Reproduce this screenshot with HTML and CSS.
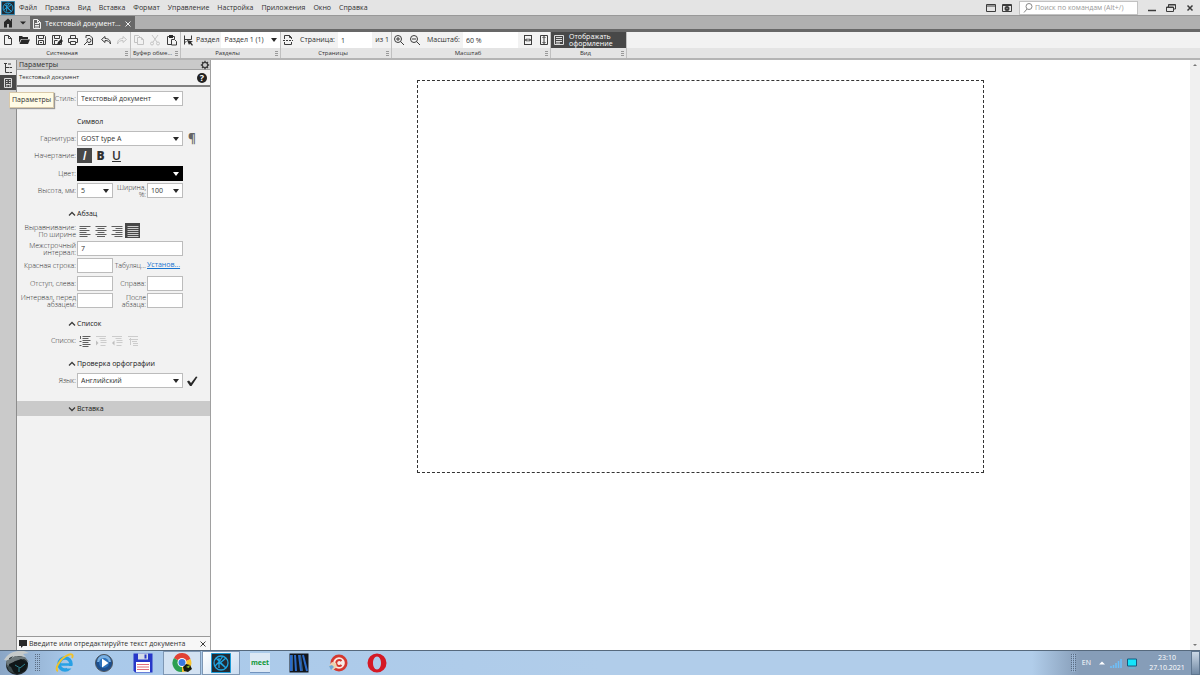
FILE: index.html
```html
<!DOCTYPE html>
<html lang="ru">
<head>
<meta charset="utf-8">
<title>Текстовый документ</title>
<link rel="stylesheet" href="styles.css">
</head>
<body>
<svg class="sprite" aria-hidden="true">
  <symbol id="i-page" viewBox="0 0 12 12"><path d="M2.500 1.500h4l3 3v6h-7zM6.500 1.500v3h3"/></symbol>
  <symbol id="i-folder" viewBox="0 0 12 12"><path class="fill" d="M1 2h3l1 1h5v2H3L1 9zM3.500 5.500H12L10 10H1.500z"/></symbol>
  <symbol id="i-save" viewBox="0 0 12 12"><path d="M1.500 1.500h8l1 1v8h-9zM3.500 1.500v3h5v-3M3.500 10.500v-4h5v4M5 8.500h2"/></symbol>
  <symbol id="i-saveas" viewBox="0 0 12 12"><path d="M1.500 1.500h8l1 1v8h-9zM3.500 1.500v3h5v-3M3.500 10.500v-4h3"/><path class="fill" d="M6 11l1-3 3-3 2 2-3 3z"/></symbol>
  <symbol id="i-print" viewBox="0 0 12 12"><path d="M3.500 4v-2.500h5V4M3 8.500H1.500v-4h9v4H9M3.500 7.500h5v3h-5z"/></symbol>
  <symbol id="i-preview" viewBox="0 0 12 12"><path d="M3 4V1.500h4l2.500 2.500v6.500H5M1 11l3-3"/><circle cx="6" cy="6.500" r="2"/></symbol>
  <symbol id="i-undo" viewBox="0 0 12 12"><path d="M5 2.500L1.500 5.500 5 8.500v-2c3 0 4.500 1 5.500 3.500C10.500 6.500 9 4.500 5 4.500z"/></symbol>
  <symbol id="i-redo" viewBox="0 0 12 12"><path d="M7 2.500l3.500 3L7 8.500v-2c-3 0-4.500 1-5.500 3.500C1.500 6.500 3 4.500 7 4.500z"/></symbol>
  <symbol id="i-copy" viewBox="0 0 12 12"><path d="M4 8.500H1.500v-7h4L7 3M4.500 3.500h4l2 2v5h-6zM8.500 3.500v2h2"/></symbol>
  <symbol id="i-cut" viewBox="0 0 12 12"><path d="M3 1l5 7M9 1L4 8"/><circle cx="3" cy="9.500" r="1.500"/><circle cx="9" cy="9.500" r="1.500"/></symbol>
  <symbol id="i-paste" viewBox="0 0 12 12"><path d="M5 10.500H1.500v-8h7V5M5.500 5.500h3l2 2v3.500h-5z"/><path class="fill" d="M3 1h4v3H3z"/></symbol>
  <symbol id="i-section" viewBox="0 0 12 12"><path d="M2.500 1.500v9M2.500 5.500h7M9.500 1.500v4M4.500 7L2.500 9"/><path class="fill" d="M5 6l6 1.500-2 1L11 11l-1 .8L8 9.500 7 11z"/></symbol>
  <symbol id="i-pagebreak" viewBox="0 0 12 12"><path d="M2.500 5V1.500h5l2 2V5M7.500 1.500v2h2M2.500 8v2.500h7V8"/><path d="M1 6.500h10" stroke-dasharray="2 1"/></symbol>
  <symbol id="i-zoomin" viewBox="0 0 12 12"><circle cx="5" cy="5" r="3.500"/><path d="M3 5h4M5 3v4M7.500 7.500L11 11"/></symbol>
  <symbol id="i-zoomout" viewBox="0 0 12 12"><circle cx="5" cy="5" r="3.500"/><path d="M3 5h4M7.500 7.500L11 11"/></symbol>
  <symbol id="i-fitw" viewBox="0 0 12 12"><path d="M2 1.500h8M2 10.500h8M2.500 1v10M9.500 1v10M3 6h6M5 4.500L3.500 6 5 7.500M7 4.500L8.500 6 7 7.500"/></symbol>
  <symbol id="i-fith" viewBox="0 0 12 12"><path d="M2.500 1.500h7v9h-7zM6 2.500v7M4.500 4L6 2.500 7.500 4M4.500 8L6 9.500 7.500 8"/></symbol>
  <symbol id="i-sheet" viewBox="0 0 12 12"><path d="M1.500 1.500h9v9h-9zM3 3.500h6M3 5.500h6M3 7.500h6M3 9h4"/></symbol>
  <symbol id="i-tree" viewBox="0 0 12 12"><path d="M3.500 1v9.500M2 1.500h3M3.500 5.500H7M3.500 10.500H7M6 2h3M7.500 5.500H10M7.500 10.500H10"/></symbol>
  <symbol id="i-params" viewBox="0 0 12 12"><path d="M2.500 1.500h7v9h-7zM4 3.500h1.500M7 3.500h1.500M4 5.500h1.500M7 5.500h1.500M4 7.500h4.500M4 9h1.500M7 9h1.500"/></symbol>
  <symbol id="i-left" viewBox="0 0 12 12"><path d="M.5 1.500h11M.5 3.500h7M.5 5.500h10M.5 7.500h7M.5 9.500h11M.5 11.500h8"/></symbol>
  <symbol id="i-center" viewBox="0 0 12 12"><path d="M.5 1.500h11M2.500 3.500h7M.5 5.500h11M2.500 7.500h7M.5 9.500h11M2 11.500h8"/></symbol>
  <symbol id="i-right" viewBox="0 0 12 12"><path d="M.5 1.500h11M4.500 3.500h7M1.500 5.500h10M4.500 7.500h7M.5 9.500h11M3.500 11.500h8"/></symbol>
  <symbol id="i-justify" viewBox="0 0 12 12"><path d="M.5 1.500h11M.5 3.500h11M.5 5.500h11M.5 7.500h11M.5 9.500h11M.5 11.500h11"/></symbol>
  <symbol id="i-list" viewBox="0 0 12 12"><path d="M3.500 1.500h8M3.500 3.500h6M3.500 5.500h8M3.500 7.500h6M3.500 9.500h8M3.500 11.500h6M1.500 1v3M.5 6.500h2M.5 10.500h2"/></symbol>
  <symbol id="i-indent" viewBox="0 0 12 12"><path d="M1 1.500h10M4.500 3.500h6M5.500 5.500h6M5.500 7.500h6M5.500 10.500h5"/><path class="fill" d="M1 5.500v5L3.500 8z"/></symbol>
  <symbol id="i-outdent" viewBox="0 0 12 12"><path d="M1 1.500h10M4.500 3.500h6M5.500 5.500h6M5.500 7.500h6M5.500 10.500h5"/><path class="fill" d="M3.500 5.500v5L1 8z"/></symbol>
  <symbol id="i-sublist" viewBox="0 0 12 12"><path d="M1 1.500h10M3.500 3v7M2 4.500h9M5 6.500h5M6 8.500h5M6 10.500h5"/></symbol>
  <symbol id="i-up" viewBox="0 0 8 8"><path d="M1 5.500l3-3 3 3" stroke-width="1.300"/></symbol>
  <symbol id="i-down" viewBox="0 0 8 8"><path d="M1 2.500l3 3 3-3" stroke-width="1.300"/></symbol>
  <symbol id="i-caret" viewBox="0 0 8 8"><path class="fill" d="M1 2h6L4 6z"/></symbol>
  <symbol id="i-compas" viewBox="0 0 20 20"><path fill="#222b33" stroke="#1b9ad6" d="M.5.5h19v19H.5z"/><g stroke="#20a4e0" stroke-width="1.300"><circle cx="10" cy="10" r="7"/><path d="M8 5v10M15 5l-6 5 6 5M5 5l10 10M4 13l4-4M12 3l-4 6"/></g></symbol>
</svg>

<div class="app">
  <header class="menubar">
    <svg class="logo"><use href="#i-compas"/></svg>
    <nav class="menu">
      <button>Файл</button><button>Правка</button><button>Вид</button><button>Вставка</button><button>Формат</button><button>Управление</button><button>Настройка</button><button>Приложения</button><button>Окно</button><button>Справка</button>
    </nav>
    <button class="tool" aria-label="Раскладка окон"><svg viewBox="0 0 12 12"><path d="M1.500 2.500h9v7h-9zM1.500 4h9"/></svg></button>
    <button class="tool" aria-label="Настройка экрана"><svg viewBox="0 0 12 12"><path d="M1.500 2.500h9v7h-9zM1.500 3.500h9"/><circle cx="6" cy="6.500" r="1.500" stroke-width="2"/></svg></button>
    <label class="search"><svg viewBox="0 0 12 12"><circle cx="7" cy="4.500" r="3"/><path d="M5 7L2 10.500"/></svg><input type="search" aria-label="Поиск по командам" placeholder="Поиск по командам (Alt+/)"></label>
    <div class="winctl">
      <button aria-label="Свернуть"><svg viewBox="0 0 12 12"><path d="M2 8.500h8" stroke-width="1.500"/></svg></button>
      <button aria-label="Восстановить"><svg viewBox="0 0 12 12"><path d="M1.500 5h7v4.500h-7zM3.500 5V2.500h7V7h-2M3.500 3h7M1.500 5.500h7"/></svg></button>
      <button aria-label="Закрыть"><svg viewBox="0 0 12 12"><path d="M3.500 3.500l5 5M8.500 3.500l-5 5" stroke-width="1.500"/></svg></button>
    </div>
  </header>

  <div class="tabs">
    <button class="home" aria-label="Главная"><svg viewBox="0 0 12 12"><path class="fill" d="M2 5l4-3.500L10 5v5.500H7V7H5v3.500H2zM9 2h1v3L9 4z"/></svg></button>
    <button class="homemenu" aria-label="Список вкладок"><svg viewBox="0 0 8 8"><path class="fill" d="M2 3h4L4 5z"/></svg></button>
    <div class="tab">
      <svg viewBox="0 0 12 12"><path d="M2.500 1.500h4l3 3v6h-7zM4 5.500h4M4 7.500h4M4 9h4M6.500 1.500v3h3"/></svg>
      <span>Текстовый документ...</span>
      <button aria-label="Закрыть вкладку"><svg class="small" viewBox="0 0 8 8"><path d="M1.500 1.500l5 5M6.500 1.500l-5 5"/></svg></button>
    </div>
  </div>

  <div class="ribbon">
    <section class="group g-system">
      <div class="tools">
        <button aria-label="Создать"><svg><use href="#i-page"/></svg></button>
        <button aria-label="Открыть"><svg><use href="#i-folder"/></svg></button>
        <button aria-label="Сохранить"><svg><use href="#i-save"/></svg></button>
        <button aria-label="Сохранить как"><svg><use href="#i-saveas"/></svg></button>
        <button aria-label="Печать"><svg><use href="#i-print"/></svg></button>
        <button aria-label="Просмотр"><svg><use href="#i-preview"/></svg></button>
        <button aria-label="Отменить"><svg><use href="#i-undo"/></svg></button>
        <button aria-label="Повторить" disabled><svg><use href="#i-redo"/></svg></button>
      </div>
      <h2>Системная</h2>
    </section>
    <section class="group g-clip">
      <div class="tools">
        <button aria-label="Копировать" disabled><svg><use href="#i-copy"/></svg></button>
        <button aria-label="Вырезать" disabled><svg><use href="#i-cut"/></svg></button>
        <button aria-label="Вставить"><svg><use href="#i-paste"/></svg></button>
      </div>
      <h2>Буфер обме...</h2>
    </section>
    <section class="group g-sections">
      <div class="tools fields">
        <svg><use href="#i-section"/></svg>
        <label for="section">Раздел</label>
        <span class="select grow"><select id="section"><option>Раздел 1 (1)</option></select><svg class="small"><use href="#i-caret"/></svg></span>
      </div>
      <h2>Разделы</h2>
    </section>
    <section class="group g-pages">
      <div class="tools fields">
        <svg><use href="#i-pagebreak"/></svg>
        <label for="page">Страница:</label>
        <input id="page" class="grow" value="1">
        <span>из 1</span>
      </div>
      <h2>Страницы</h2>
    </section>
    <section class="group g-zoom">
      <div class="tools fields">
        <button aria-label="Увеличить"><svg><use href="#i-zoomin"/></svg></button>
        <button aria-label="Уменьшить"><svg><use href="#i-zoomout"/></svg></button>
        <label for="zoom">Масштаб:</label>
        <input id="zoom" class="grow" value="60 %">
        <button aria-label="По ширине"><svg><use href="#i-fitw"/></svg></button>
        <button aria-label="По высоте"><svg><use href="#i-fith"/></svg></button>
      </div>
      <h2>Масштаб</h2>
    </section>
    <section class="group g-view">
      <button class="toggle"><svg><use href="#i-sheet"/></svg><span>Отображать<br>оформление</span></button>
      <h2>Вид</h2>
    </section>
    <div class="rest"></div>
  </div>

  <main class="work">
    <nav class="rail">
      <button aria-label="Дерево"><svg><use href="#i-tree"/></svg></button>
      <button class="on" aria-label="Параметры"><svg><use href="#i-params"/></svg></button>
      <div class="tooltip" role="tooltip">Параметры</div>
    </nav>

    <aside class="panel">
      <div class="phead"><span>Параметры</span><button aria-label="Настройка панели"><svg viewBox="0 0 12 12"><circle cx="6" cy="6" r="3.200" stroke-width="1.400"/><path stroke-width="1.600" d="M6 1v2M6 9v2M1 6h2M9 6h2M2.500 2.500l1.300 1.300M8.200 8.200l1.300 1.300M9.500 2.500L8.200 3.800M3.800 8.200L2.500 9.500"/></svg></button></div>
      <div class="psub"><span>Текстовый документ</span><button class="help" aria-label="Справка">?</button></div>

      <form class="form">
        <div class="row">
          <label for="style">Стиль:</label>
          <span class="select wide"><select id="style"><option>Текстовый документ</option></select><svg class="small"><use href="#i-caret"/></svg></span>
        </div>

        <h3>Символ</h3>
        <div class="row">
          <label for="font">Гарнитура:</label>
          <span class="select wide"><select id="font"><option>GOST type A</option></select><svg class="small"><use href="#i-caret"/></svg></span>
          <button type="button" class="pilcrow" aria-label="Непечатаемые символы">¶</button>
        </div>
        <div class="row tall">
          <span class="label">Начертание:</span>
          <span class="btns letters"><button type="button" class="on"><i>I</i></button><button type="button"><b>B</b></button><button type="button"><u>U</u></button></span>
        </div>
        <div class="row">
          <label for="color">Цвет:</label>
          <span class="select wide black"><select id="color"><option aria-label="Чёрный"></option></select><svg class="small"><use href="#i-caret"/></svg></span>
        </div>
        <div class="row">
          <label for="height">Высота, мм:</label>
          <span class="select half"><select id="height"><option>5</option></select><svg class="small"><use href="#i-caret"/></svg></span>
          <label for="width">Ширина,<br>%:</label>
          <span class="select half"><select id="width"><option>100</option></select><svg class="small"><use href="#i-caret"/></svg></span>
        </div>

        <h3><svg class="small"><use href="#i-up"/></svg>Абзац</h3>
        <div class="row tall">
          <span class="label">Выравнивание:<br>По ширине</span>
          <span class="btns align"><button type="button" aria-label="По левому краю"><svg><use href="#i-left"/></svg></button><button type="button" aria-label="По центру"><svg><use href="#i-center"/></svg></button><button type="button" aria-label="По правому краю"><svg><use href="#i-right"/></svg></button><button type="button" class="on" aria-label="По ширине"><svg><use href="#i-justify"/></svg></button></span>
        </div>
        <div class="row">
          <label for="leading">Межстрочный<br>интервал:</label>
          <input id="leading" class="wide" value="7">
        </div>
        <div class="row tall">
          <label for="indent">Красная строка:</label>
          <input id="indent" class="half">
          <span class="label">Табуляц...</span>
          <a href="#tabs">Установ...</a>
        </div>
        <div class="row">
          <label for="left">Отступ, слева:</label>
          <input id="left" class="half">
          <label for="right">Справа:</label>
          <input id="right" class="half">
        </div>
        <div class="row">
          <label for="before">Интервал, перед<br>абзацем:</label>
          <input id="before" class="half">
          <label for="after">После<br>абзаца:</label>
          <input id="after" class="half">
        </div>

        <h3><svg class="small"><use href="#i-up"/></svg>Список</h3>
        <div class="row">
          <span class="label">Список:</span>
          <span class="btns align"><button type="button" aria-label="Список"><svg><use href="#i-list"/></svg></button><button type="button" disabled aria-label="Увеличить уровень"><svg><use href="#i-indent"/></svg></button><button type="button" disabled aria-label="Уменьшить уровень"><svg><use href="#i-outdent"/></svg></button><button type="button" disabled aria-label="Подсписок"><svg><use href="#i-sublist"/></svg></button></span>
        </div>

        <h3><svg class="small"><use href="#i-up"/></svg>Проверка орфографии</h3>
        <div class="row">
          <label for="lang">Язык:</label>
          <span class="select wide"><select id="lang"><option>Английский</option></select><svg class="small"><use href="#i-caret"/></svg></span>
          <button type="button" class="check" aria-label="Проверить"><svg viewBox="0 0 12 12"><path class="fill" d="M1 6.500L3 5.500l2 2.500L10 1.500l1.500.5L5.500 11H4z"/></svg></button>
        </div>
        <h3 class="bar"><svg class="small"><use href="#i-down"/></svg>Вставка</h3>
      </form>

      <div class="hint"><svg class="small" viewBox="0 0 8 8"><path class="fill" d="M0 0h8v6H4L2 8V6H0z"/></svg><span>Введите или отредактируйте текст документа</span><button aria-label="Закрыть подсказку"><svg class="small" viewBox="0 0 8 8"><path d="M1.500 1.500l5 5M6.500 1.500l-5 5"/></svg></button></div>
    </aside>

    <div class="canvas"><div class="sheet"></div></div>
    <div class="scroll"><svg viewBox="0 0 8 8"><path d="M2 5h4L4 3z"/></svg><svg viewBox="0 0 8 8"><path d="M2 3h4L4 5z"/></svg></div>
  </main>

  <footer class="taskbar">
    <button class="start" aria-label="Пуск"><svg viewBox="0 0 30 24"><ellipse cx="16" cy="14" rx="11" ry="10" fill="#20282b"/><path fill="#c5caca" d="M3 9C7 2 14-1 23 0l5 2-6 1 3 3-8-1-8 4 3-4-4 2 1 3z"/><path fill="#6d787b" d="M5 10l9-5 10 1 4 5-5-3-9 2-8 6z"/><path fill="#101719" d="M8 13l12-5 7 4-3 8-8 3-7-4z"/><path fill="#3c4a4d" d="M6 14l4 2 3 6-5-2z"/><path d="M14 14l5 3 5-4M18 17v4" stroke="#2c8290"/></svg></button>
    <div class="grip"></div>
    <div class="apps">
      <button aria-label="Internet Explorer"><svg viewBox="0 0 20 20"><circle cx="10" cy="11" r="6" stroke="#28a1e5" stroke-width="3.500"/><path d="M5 11.500h12" stroke="#28a1e5" stroke-width="2.500"/><path d="M12 15.500h7V13h-7z" fill="#aacbe9"/><path d="M3 18C-1 17 4 7 11 3c5-3 8-2 6 2" stroke="#f0c22c" stroke-width="2"/></svg></button>
      <button aria-label="Проигрыватель"><svg viewBox="0 0 20 20"><circle cx="10" cy="10" r="8.500" fill="#1d4f8e" stroke="#50565c"/><path d="M3 9a7 7 0 0 1 14 0z" fill="#78afe2"/><circle cx="10" cy="10" r="5" fill="#2c71bb"/><path d="M8 5.500v9l6.500-4.500z" fill="#fff"/></svg></button>
      <button aria-label="Total Commander"><svg viewBox="0 0 20 20"><path d="M.5.5h19v19H2l-1.500-2z" fill="#2737c8"/><path d="M5 .5h10v6H5z" fill="#d5dce8"/><path d="M11.500 1.500h2v4h-2z" fill="#2737c8"/><path d="M3 9h14v10H3z" fill="#fff"/><path d="M4 11.500h12M4 14h12M4 16.500h12" stroke="#df6c7a"/></svg></button>
      <button class="open" aria-label="Chrome"><svg viewBox="0 0 20 20"><path d="M10 10L2 5a9 9 0 0 1 16.500 1z" fill="#e24234"/><path d="M10 10l8.500-4A9 9 0 0 1 10 19z" fill="#f8c42e"/><path d="M10 10v9A9 9 0 0 1 2 5z" fill="#2c9f52"/><circle cx="10" cy="9.500" r="4.500" fill="#fff"/><circle cx="10" cy="9.500" r="3.500" fill="#3979e1"/><path d="M11 14l3-3 4 1 2 4-4 3-4-1z" fill="#151a10"/><path d="M14 14l4-2-1 3z" fill="#8bc02d"/></svg></button>
      <button class="open current" aria-label="Компас"><svg><use href="#i-compas"/></svg></button>
      <button aria-label="meet"><span class="meet">meet</span></button>
      <button aria-label="Библиотека"><svg viewBox="0 0 20 20"><path d="M.5.5h19v19H.5z" fill="#11151c"/><path d="M2 2v16M6 2l1 16M10 2l2 16M14 2l4 16" stroke="#2a6ac8" stroke-width="2"/><path d="M3.500 2v16M11.500 2l2 16" stroke="#579bd9" stroke-width=".6"/></svg></button>
      <button aria-label="CCleaner"><svg viewBox="0 0 20 20"><circle cx="11" cy="10" r="8.500" fill="#d5382f"/><circle cx="11" cy="10" r="5.800" fill="#f8ece6"/><path d="M13.500 8a3 3 0 1 0 0 4" stroke="#d5382f" stroke-width="2"/><path d="M1 13l3-4 4 1 1 4-4 3z" fill="#ecd3b0"/><path d="M1 13l3-1 2 2-3 3z" fill="#70a8d8"/></svg></button>
      <button aria-label="Opera"><svg viewBox="0 0 20 20"><path fill="#d41925" fill-rule="evenodd" d="M10 .5a9.500 9.500 0 1 0 0 19 9.500 9.500 0 0 0 0-19zm0 3c2.500 0 4 3 4 6.500s-1.500 6.500-4 6.500S6 13.500 6 10s1.500-6.500 4-6.500z"/></svg></button>
    </div>
    <div class="tray">
      <div class="grip"></div>
      <span class="lang">EN</span>
      <svg class="small" viewBox="0 0 8 8"><path d="M1 5.500h6L4 2.500z" fill="#fff" stroke="none"/></svg>
      <svg viewBox="0 0 12 12"><path d="M1 9v2M3.500 11V8M6 11V6M8.500 11V4M11 11V2" stroke="#6cc0fb" stroke-width="1.500"/></svg>
      <svg viewBox="0 0 12 12"><path d="M1.500 2h9v7h-9z" fill="#13e4fb" stroke="#145c83"/><path d="M3 11h6" stroke="#54bfe0"/></svg>
      <div class="clock"><span>23:10</span><span>27.10.2021</span></div>
    </div>
    <button class="desk" aria-label="Показать рабочий стол"></button>
  </footer>
</div>
</body>
</html>
```
FILE: styles.css
```css
* { box-sizing: border-box; }
body { margin: 0; font: 7px/8px "Open Sans", "Noto Sans", sans-serif; color: #303030; }
button, input, select { font: inherit; color: inherit; border: 0; padding: 0; margin: 0; background: none; border-radius: 0; min-width: 0; }
h2, h3 { font: inherit; margin: 0; }
button { display: flex; align-items: center; justify-content: center; }
svg { width: 12px; height: 12px; flex: none; display: block; fill: none; stroke: #3c3c3c; stroke-width: 1; }
svg.small { width: 8px; height: 8px; }
svg.sprite { position: absolute; width: 0; height: 0; }
.fill { fill: var(--mark, #282828); stroke: none; }
button:disabled { opacity: .25; }

.app { display: flex; flex-direction: column; height: 100vh; }

.menubar { display: flex; align-items: center; height: 15px; background: #e4e4e4; flex: none; }
.menubar .logo { width: 14px; height: 14px; margin: 0 4px 0 1px; }
.menu { display: flex; flex: 1; gap: 8px; }
.tool { width: 16px; }
.search { display: flex; align-items: center; width: 119px; height: 14px; margin: 0 8px 0 4px; padding-left: 2px; background: #fff; border: 1px solid #c2c2c2; }
.search svg { stroke: #888; }
.search input { flex: 1; outline: 0; padding-left: 1px; }
.search input::placeholder { color: #999; opacity: 1; }
.winctl { display: flex; width: 54px; justify-content: space-between; padding-right: 4px; }

.tabs { display: flex; height: 17px; background: #b0b0b0; border-top: 1px solid #999; border-bottom: 3px solid #686868; flex: none; }
.home { width: 16px; }
.homemenu { width: 14px; }
.tab { display: flex; align-items: center; gap: 2px; width: 105px; height: 15px; padding-left: 1px; background: #686868; color: #fff; }
.tab svg { stroke: #f0f0f0; }
.tab button { margin-left: auto; margin-right: 2px; width: 10px; }

.ribbon { display: flex; flex: none; height: 28px; background: #e4e4e4; border-bottom: 2px solid #b4b4b4; }
.group { flex: none; border-right: 1px solid #c0c0c0; }
.g-system { width: 131px; }
.g-clip { width: 50px; }
.g-sections { width: 100px; }
.g-pages { width: 111px; }
.g-zoom { width: 159px; }
.g-view { width: 76px; }
.tools { display: flex; align-items: center; height: 16px; background: #f2f2f2; }
.tools button { flex: 1; }
.fields { gap: 3px; white-space: nowrap; }
.fields > svg { margin-left: 1px; }
.fields button { flex: 0 0 13px; height: 16px; }
.grow { flex: 1; }
.g-sections .fields { gap: 2px; }
.fields input { background: #fff; height: 16px; padding-left: 3px; width: 0; }
.fields .select { height: 16px; background: #fff; }
.fields > span:last-child { padding-right: 2px; }
.g-zoom .fields label, .g-pages .fields label { padding-left: 3px; }
.group h2 { height: 10px; line-height: 11px; font-size: 6px; text-align: center; padding-right: 6px; background: repeating-linear-gradient(#999 0 1px, #e4e4e4 1px 2px) right 2px top 3px / 3px 5px no-repeat, #e4e4e4; }
.toggle { width: 100%; height: 16px; justify-content: flex-start; gap: 4px; padding-left: 2px; background: #484848; color: #fff; line-height: 7px; text-align: left; }
.toggle svg { stroke: #ddd; }
.rest { flex: 1; height: 16px; background: #f2f2f2; }

.select { display: flex; position: relative; align-items: center; }
.select select { appearance: none; width: 100%; height: 100%; padding-left: 3px; }
.select svg { position: absolute; right: 2px; pointer-events: none; }

.work { display: flex; flex: 1; min-height: 0; background: #fff; }
.rail { position: relative; width: 17px; background: #cacaca; border-right: 1px solid #8c8c8c; flex: none; }
.rail button { width: 16px; height: 15px; background: #e9e9e9; }
.rail .on { background: #484848; }
.rail .on svg { stroke: #ddd; }
.tooltip { position: absolute; left: 9px; top: 32px; z-index: 2; padding: 3px 2px; background: #fffbe5; border: 1px solid #d9c9aa; box-shadow: 1px 1px 1px #999; }

.panel { display: flex; flex-direction: column; width: 194px; background: #f2f2f2; border-right: 1px solid #a0a0a0; flex: none; }
.phead { display: flex; align-items: center; justify-content: space-between; height: 10px; padding-left: 2px; background: #cacaca; border-bottom: 1px solid #a0a0a0; }
.phead svg { width: 10px; height: 10px; }
.psub { display: flex; justify-content: space-between; height: 17px; padding: 3px 3px 0 2px; font-size: 6px; border-bottom: 2px solid #808080; }
.help { width: 10px; height: 10px; border-radius: 50%; background: #222; color: #fff; font-size: 9px; font-weight: 700; }

.form { padding-top: 4px; flex: 1; }
.row { display: grid; grid-template-columns: 59px 36px 34px 36px 18px; column-gap: 0; height: 17px; align-items: start; padding-left: 1px; }
.row.tall { height: 18px; }
.row label, .row .label { height: 15px; display: flex; align-items: center; justify-content: flex-end; text-align: right; padding-right: 1px; line-height: 7px; font-weight: 300; white-space: nowrap; }
.row input, .row .select { height: 15px; width: 100%; background: #fff; border: 1px solid #bcbcbc; }
.row input { padding-left: 3px; }
.wide { grid-column: span 3; }
.row .black { background: #000; border-color: #000; --mark: #fff; }
.row a { line-height: 13px; color: #1874d0; white-space: nowrap; }
.btns { grid-column: span 3; display: flex; gap: 1px; }
.btns button { width: 15px; height: 15px; }
.align svg { stroke: #606060; }
.btns .on { background: #484848; color: #fff; }
.btns .on svg { stroke: #ccc; }
.letters { font-size: 12px; font-weight: 600; }
.pilcrow { font-size: 12px; height: 15px; color: #666; font-weight: 700; }
.check { height: 15px; }
.form h3 { display: flex; align-items: center; height: 10px; padding-left: 60px; margin: 9px 0 4px; color: #181818; }
.form h3:has(svg) { padding-left: 51px; gap: 1px; }
.form h3.bar { height: 15px; margin: 11px 0 0; background: #cacaca; }
.hint { display: flex; align-items: center; height: 14px; padding: 0 3px 0 2px; gap: 2px; border-top: 1px solid #999; background: #f7f7f7; }
.hint button { margin-left: auto; }

.canvas { flex: 1; padding-top: 20px; }
.sheet { width: 58%; aspect-ratio: 568 / 393; margin: 0 auto; border: 1px dashed #333; }
.scroll { display: flex; flex-direction: column; align-items: center; justify-content: space-between; width: 10px; padding: 1px 0; background: #f0f0f0; }
.scroll svg { width: 8px; height: 8px; fill: #777; stroke: none; }

.taskbar { display: flex; align-items: center; height: 25px; border-top: 1px solid #56697d; background: linear-gradient(90deg, #8aa6c6, #a9c9ea 6%, #b1cdea 50%, #b1cdea 86%, #869db8 90%); flex: none; }
.start { width: 30px; height: 24px; margin-left: 1px; }
.start svg { width: 30px; height: 24px; stroke: none; }
.grip { width: 5px; height: 18px; margin: 0 4px; background: linear-gradient(90deg, transparent 1px, #9db8d6 1px 2px, transparent 2px 3px, #9db8d6 3px 4px, transparent 4px), repeating-linear-gradient(#5b6e85 0 1px, transparent 1px 2px); }
.apps { display: flex; flex: 1; gap: 1px; margin-left: 2px; }
.apps button { width: 38px; height: 24px; }
.apps svg { width: 20px; height: 20px; stroke: none; }
.apps .open { background: #d3e2f2; border: 1px solid #7e97b4; }
.apps .current { background: linear-gradient(135deg, #fff, #c9dcf0); }
.meet { width: 20px; height: 20px; line-height: 20px; background: #dce8f5; color: #12983b; font-weight: 700; border-bottom: 1px solid #7293be; }
.tray { display: flex; align-items: center; color: #fff; gap: 4px; }
.tray .grip { margin: 0 2px 0 0; }
.tray .lang { margin-right: 3px; }
.clock { display: flex; flex-direction: column; align-items: center; line-height: 10px; width: 42px; margin-left: 4px; }
.desk { width: 9px; height: 24px; margin-left: 3px; border: 1px solid #5f768f; background: linear-gradient(#cbd8e6, #7189a4); }
```
